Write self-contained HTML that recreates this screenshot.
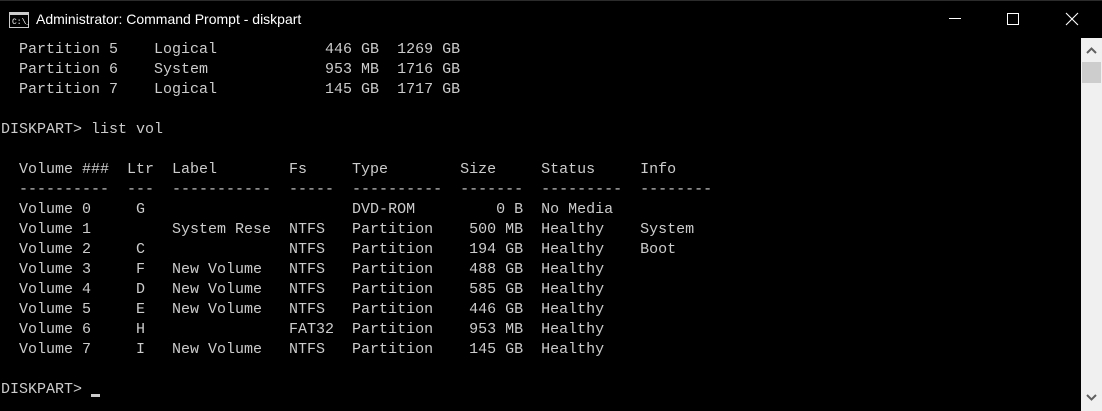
<!DOCTYPE html>
<html><head><style>
html,body{margin:0;padding:0;width:1102px;height:411px;background:#000;overflow:hidden}
#top{position:absolute;left:0;top:0;width:1102px;height:1px;background:#2b2b2b}
#title{position:absolute;left:36px;top:11px;color:#fff;font:14px "Liberation Sans",sans-serif;white-space:nowrap}
pre{position:absolute;left:1px;top:40px;margin:0;font:15px/20px "Liberation Mono",monospace;color:#cccccc}
#sb{position:absolute;left:1081px;top:38px;width:21px;height:373px;background:#f0f0f0}
#thumb{position:absolute;left:1082px;top:62px;width:19px;height:21px;background:#cdcdcd}
#cur{position:absolute;left:91px;top:394px;width:9px;height:3px;background:#ccc}
</style></head><body>
<div id="top"></div>
<svg style="position:absolute;left:9px;top:12px" width="20" height="16" viewBox="0 0 20 16">
<rect x="0.5" y="0.5" width="19" height="15" fill="#000" stroke="#ccc"/>
<rect x="1" y="1" width="18" height="2" fill="#ccc"/>
<text x="3" y="12" font-family="Liberation Mono" font-size="8" fill="#fff">C:\_</text>
</svg>
<div id="title">Administrator: Command Prompt - diskpart</div>
<svg style="position:absolute;left:940px;top:0" width="162" height="38">
<line x1="9" y1="18.5" x2="21" y2="18.5" stroke="#fff"/>
<rect x="67.5" y="13.5" width="11" height="11" fill="none" stroke="#fff"/>
<path d="M126 13L138 25M138 13L126 25" stroke="#fff" stroke-width="1.1"/>
</svg>
<div id="sb"></div><div id="thumb"></div>
<svg style="position:absolute;left:1081px;top:38px" width="21" height="373">
<path d="M6 15L10.5 10.5L15 15" fill="none" stroke="#606060" stroke-width="2"/>
<path d="M6 357L10.5 361.5L15 357" fill="none" stroke="#606060" stroke-width="2"/>
</svg>
<pre>  Partition 5    Logical            446 GB  1269 GB
  Partition 6    System             953 MB  1716 GB
  Partition 7    Logical            145 GB  1717 GB

DISKPART&gt; list vol

  Volume ###  Ltr  Label        Fs     Type        Size     Status     Info
  ----------  ---  -----------  -----  ----------  -------  ---------  --------
  Volume 0     G                       DVD-ROM         0 B  No Media
  Volume 1         System Rese  NTFS   Partition    500 MB  Healthy    System
  Volume 2     C                NTFS   Partition    194 GB  Healthy    Boot
  Volume 3     F   New Volume   NTFS   Partition    488 GB  Healthy
  Volume 4     D   New Volume   NTFS   Partition    585 GB  Healthy
  Volume 5     E   New Volume   NTFS   Partition    446 GB  Healthy
  Volume 6     H                FAT32  Partition    953 MB  Healthy
  Volume 7     I   New Volume   NTFS   Partition    145 GB  Healthy

DISKPART&gt; </pre>
<div id="cur"></div>
</body></html>
